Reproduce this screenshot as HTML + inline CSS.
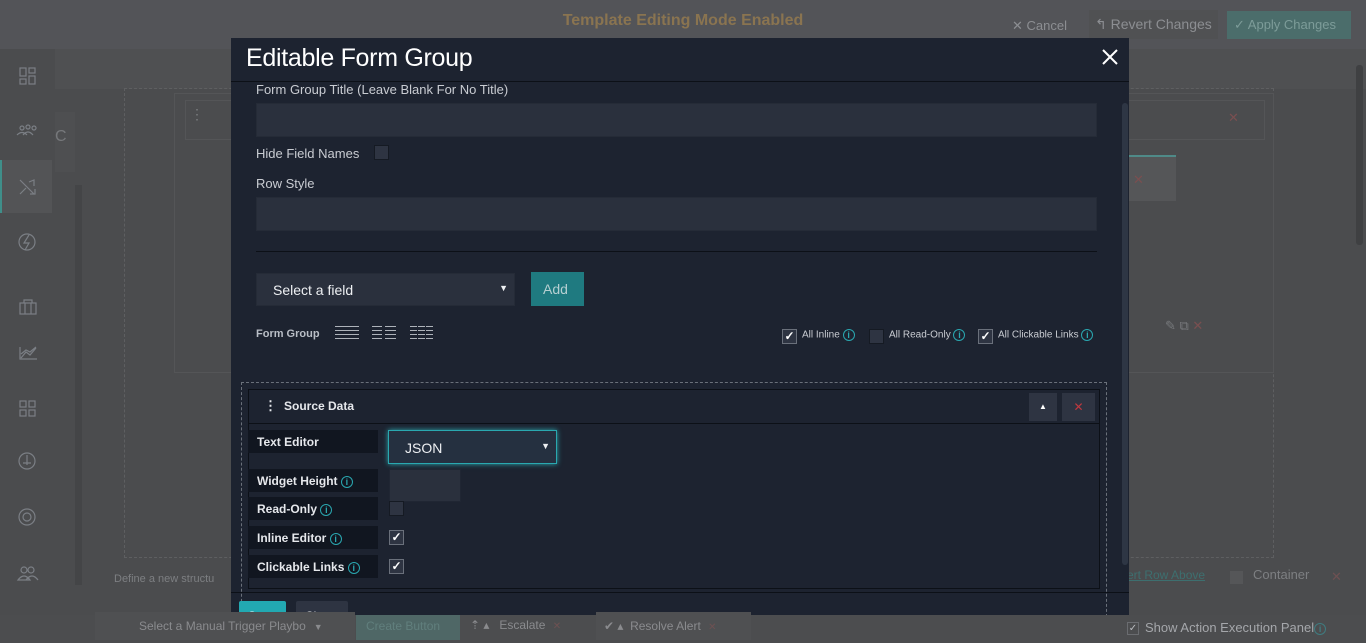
<!DOCTYPE html>
<html><head><meta charset="utf-8"><style>
*{box-sizing:border-box;margin:0;padding:0}
body{width:1366px;height:643px;overflow:hidden;background:#4b4c4e;font-family:"Liberation Sans",sans-serif;position:relative}
.a{position:absolute}
.lbl{color:#c9ccd2;font-size:13px}
.inp{background:#2a303d;border:1px solid #252b37}
.cb{width:15px;height:15px;background:#2e3442;border:1px solid #151a23}
.cbk{width:15px;height:15px;background:#2e3442;border:1px solid #6a707b;color:#fff;font-size:12px;line-height:13px;text-align:center;font-weight:bold}
.info{display:inline-block;width:12px;height:12px;border:1px solid #2aa7b0;border-radius:50%;color:#2aa7b0;font-size:9px;line-height:10px;text-align:center;vertical-align:middle;font-weight:bold}
.rl{background:#111620;color:#e6e8ec;font-size:12px;font-weight:bold;padding:5px 9px;left:248px;width:130px;height:23px}
.sic{stroke:#7b7f85;fill:none;stroke-width:1.2}
</style></head><body>
<div class="a" style="left:0;top:0;width:1366px;height:49px;background:#535458"></div>
<div class="a" style="left:0;top:12px;width:1366px;text-align:center;color:#8a7450;font-weight:bold;font-size:16px">Template Editing Mode Enabled</div>
<div class="a" style="left:1012px;top:18px;color:#8c8e92;font-size:13px">✕ Cancel</div>
<div class="a" style="left:1089px;top:10px;width:129px;height:29px;background:#505153;color:#8c8e92;font-size:14px;padding:6px 0 0 6px">↰ Revert Changes</div>
<div class="a" style="left:1227px;top:11px;width:124px;height:28px;background:#4b6d6b;color:#7d9c99;font-size:13px;padding:6px 0 0 7px">✓ Apply Changes</div>
<div class="a" style="left:0;top:49px;width:52px;height:594px;background:#4b4c4e"></div>
<div class="a" style="left:0;top:160px;width:52px;height:53px;background:#535456;border-left:2px solid #3f8f8a"></div>
<svg class="a" style="left:0;top:49px" width="52" height="560">
<g class="sic"><rect x="20" y="19" width="6" height="8"/><rect x="29" y="19" width="6" height="5"/><rect x="20" y="30" width="6" height="5"/><rect x="29" y="27" width="6" height="8"/>
<circle cx="22" cy="79" r="2"/><circle cx="28" cy="78" r="2"/><circle cx="34" cy="79" r="2"/><path d="M17 86q5-5 10 0M23 86q5-6 10 0"/>
<path d="M20 131l14 14M20 145l6-6M29 133l5-2v6M30 145h5v-5"/>
<circle cx="27" cy="193" r="8"/><path d="M29 186l-5 8h5l-4 7"/>
<rect x="20" y="254" width="16" height="11"/><path d="M24 254v-3h8v3M25 254v11M31 254v11"/>
<path d="M20 298v12h17M21 309l5-6 4 3 6-7M21 305l5-4 4 2 6-5"/>
<rect x="20" y="352" width="6" height="6"/><rect x="29" y="352" width="6" height="6"/><rect x="20" y="361" width="6" height="6"/><rect x="29" y="361" width="6" height="6"/>
<circle cx="27" cy="412" r="8"/><path d="M27 406v10M23 414h8"/>
<circle cx="27" cy="468" r="8"/><circle cx="27" cy="468" r="4"/>
<circle cx="24" cy="521" r="3"/><circle cx="31" cy="521" r="3"/><path d="M18 531q6-8 12 0zM26 531q6-8 12 0"/></g></svg>
<div class="a" style="left:55px;top:49px;width:1311px;height:40px;background:#4f5052"></div>
<div class="a" style="left:55px;top:112px;width:20px;height:60px;background:#4e4f51;color:#76787b;font-size:16px;padding-top:16px">C</div>
<div class="a" style="left:75px;top:185px;width:7px;height:400px;background:#444547"></div>
<div class="a" style="left:124px;top:88px;width:1150px;height:470px;border:1px dashed #5e5f61"></div>
<div class="a" style="left:174px;top:93px;width:1100px;height:280px;border:1px solid #545557"></div>
<div class="a" style="left:185px;top:100px;width:1080px;height:40px;border:1px solid #545557"></div>
<div class="a" style="left:190px;top:106px;color:#7b7d80;font-size:14px">⋮</div>
<div class="a" style="left:1228px;top:110px;color:#7a4f50;font-size:13px">✕</div>
<div class="a" style="left:1129px;top:155px;width:47px;height:46px;background:#555658;border-top:2px solid #4f8a88"></div>
<div class="a" style="left:1133px;top:172px;color:#7a4f50;font-size:13px">✕</div>
<div class="a" style="left:1165px;top:318px;color:#77797c;font-size:13px">✎ ⧉ <span style="color:#7a4f50">✕</span></div>
<div class="a" style="left:1356px;top:65px;width:7px;height:180px;background:#3f4042;border-radius:3px"></div>
<div class="a" style="left:114px;top:573px;color:#7d7f82;font-size:11px">Define a new structu</div>
<div class="a" style="left:1127px;top:568px;color:#3d6f6f;font-size:12px;text-decoration:underline">ert Row Above</div>
<div class="a" style="left:1230px;top:571px;width:13px;height:13px;background:#555658"></div>
<div class="a" style="left:1253px;top:567px;color:#7d7f82;font-size:13px">Container</div>
<div class="a" style="left:1331px;top:569px;color:#6e5152;font-size:13px">✕</div>
<!-- modal -->
<div class="a" style="left:231px;top:38px;width:898px;height:577px;background:#1d2330"></div>
<div class="a" style="left:231px;top:38px;width:898px;height:44px;border-bottom:1px solid #0c1017"></div>
<div class="a" style="left:246px;top:44px;color:#fff;font-size:25px;letter-spacing:-0.3px">Editable Form Group</div>
<svg class="a" style="left:1102px;top:49px" width="16" height="16"><path d="M1 1L15 15M15 1L1 15" stroke="#fff" stroke-width="2"/></svg>
<div class="a" style="left:1122px;top:103px;width:6px;height:462px;background:#2e3644;border-radius:3px"></div>
<div class="a lbl" style="left:256px;top:82px">Form Group Title (Leave Blank For No Title)</div>
<div class="a inp" style="left:256px;top:103px;width:841px;height:34px"></div>
<div class="a lbl" style="left:256px;top:146px">Hide Field Names</div>
<div class="a cb" style="left:374px;top:145px"></div>
<div class="a lbl" style="left:256px;top:176px">Row Style</div>
<div class="a inp" style="left:256px;top:197px;width:841px;height:34px"></div>
<div class="a" style="left:256px;top:251px;width:841px;height:1px;background:#0c1017"></div>
<div class="a inp" style="left:256px;top:273px;width:259px;height:33px;color:#eef0f3;font-size:14px;padding:8px 0 0 16px">Select a field<span style="position:absolute;right:6px;top:9px;font-size:9px">▼</span></div>
<div class="a" style="left:531px;top:272px;width:53px;height:34px;background:#1f7a80;color:#b6cfd1;font-size:14px;padding:9px 0 0 12px">Add</div>
<div class="a" style="left:256px;top:328px;color:#b9bec6;font-size:11px;font-weight:bold">Form Group</div>
<svg class="a" style="left:335px;top:324px" width="100" height="16"><g stroke="#aeb3ba" stroke-width="1"><path d="M0 2.5h24M0 6.5h24M0 10.5h24M0 14.5h24"/><path d="M37 2.5h10M37 6.5h10M37 10.5h10M37 14.5h10M50 2.5h11M50 6.5h11M50 10.5h11M50 14.5h11"/><path d="M75 2.5h7M75 6.5h7M75 10.5h7M75 14.5h7M83 2.5h7M83 6.5h7M83 10.5h7M83 14.5h7M91 2.5h7M91 6.5h7M91 10.5h7M91 14.5h7"/></g></svg>
<div class="a cbk" style="left:782px;top:329px">✓</div>
<div class="a" style="left:802px;top:329px;color:#c9ccd2;font-size:10px">All Inline <span class="info">i</span></div>
<div class="a cb" style="left:869px;top:329px"></div>
<div class="a" style="left:889px;top:329px;color:#c9ccd2;font-size:10px">All Read-Only <span class="info">i</span></div>
<div class="a cbk" style="left:978px;top:329px">✓</div>
<div class="a" style="left:998px;top:329px;color:#c9ccd2;font-size:10px">All Clickable Links <span class="info">i</span></div>
<div class="a" style="left:241px;top:382px;width:866px;height:240px;border:1px dashed #6a707a"></div>
<div class="a" style="left:248px;top:389px;width:852px;height:200px;border:1px solid #0c1017"></div>
<div class="a" style="left:249px;top:390px;width:850px;height:34px;border-bottom:1px solid #0c1017"></div>
<div class="a" style="left:264px;top:398px;color:#e6e8ec;font-size:13px;font-weight:bold">⋮</div>
<div class="a" style="left:284px;top:399px;color:#e6e8ec;font-size:12px;font-weight:bold">Source Data</div>
<div class="a" style="left:1029px;top:393px;width:28px;height:28px;background:#2e3442;color:#fff;font-size:8px;text-align:center;line-height:28px">▲</div>
<div class="a" style="left:1062px;top:393px;width:33px;height:28px;background:#2e3442;color:#c0393f;font-size:12px;text-align:center;line-height:28px">✕</div>
<div class="a rl" style="top:430px">Text Editor</div>
<div class="a" style="left:388px;top:430px;width:169px;height:34px;background:#253040;border:1px solid #2aa8b0;box-shadow:0 0 5px #2aa8b0;color:#eef0f3;font-size:14px;padding:9px 0 0 16px">JSON<span style="position:absolute;right:6px;top:10px;font-size:9px">▼</span></div>
<div class="a rl" style="top:469px">Widget Height <span class="info">i</span></div>
<div class="a" style="left:389px;top:469px;width:72px;height:33px;background:#2a303d;border:1px solid #202633"></div>
<div class="a rl" style="top:497px">Read-Only <span class="info">i</span></div>
<div class="a cb" style="left:389px;top:501px"></div>
<div class="a rl" style="top:526px">Inline Editor <span class="info">i</span></div>
<div class="a cbk" style="left:389px;top:530px">✓</div>
<div class="a rl" style="top:555px">Clickable Links <span class="info">i</span></div>
<div class="a cbk" style="left:389px;top:559px">✓</div>
<div class="a" style="left:231px;top:592px;width:898px;height:1px;background:#0c1017"></div>
<div class="a" style="left:239px;top:601px;width:47px;height:20px;background:#22a9b2;border-radius:2px;color:#fff;font-size:12px;padding:8px 0 0 9px">Save</div>
<div class="a" style="left:296px;top:601px;width:52px;height:20px;background:#2e3442;border-radius:2px;color:#fff;font-size:12px;padding:8px 0 0 9px">Close</div>
<!-- bottom bar overlay -->
<div class="a" style="left:0;top:615px;width:1366px;height:28px;background:#4c4d4f"></div>
<div class="a" style="left:95px;top:612px;width:260px;height:28px;background:#4f5052"></div>
<div class="a" style="left:139px;top:619px;color:#8a8b8e;font-size:12px">Select a Manual Trigger Playbo<span style="margin-left:8px;font-size:9px">▼</span></div>
<div class="a" style="left:356px;top:615px;width:104px;height:25px;background:#4f6766;color:#617f7d;font-size:12px;padding:4px 0 0 10px">Create Button</div>
<div class="a" style="left:470px;top:618px;color:#8a8b8e;font-size:12px">⇡ ▴ &nbsp;&nbsp;Escalate <span style="color:#6e5152;font-size:10px;margin-left:4px">✕</span></div>
<div class="a" style="left:596px;top:612px;width:155px;height:28px;background:#4f5052"></div>
<div class="a" style="left:604px;top:619px;color:#8a8b8e;font-size:12px">✔ ▴ &nbsp;Resolve Alert <span style="color:#6e5152;font-size:10px;margin-left:4px">✕</span></div>
<div class="a" style="left:1127px;top:622px;width:12px;height:13px;border:1px solid #6a6c70;color:#b9bbbf;font-size:10px;line-height:11px;text-align:center">✓</div>
<div class="a" style="left:1145px;top:620px;color:#a5a7ab;font-size:13px">Show Action Execution Panel<span class="info" style="border-color:#3f7c80;color:#3f7c80">i</span></div>
</body></html>
